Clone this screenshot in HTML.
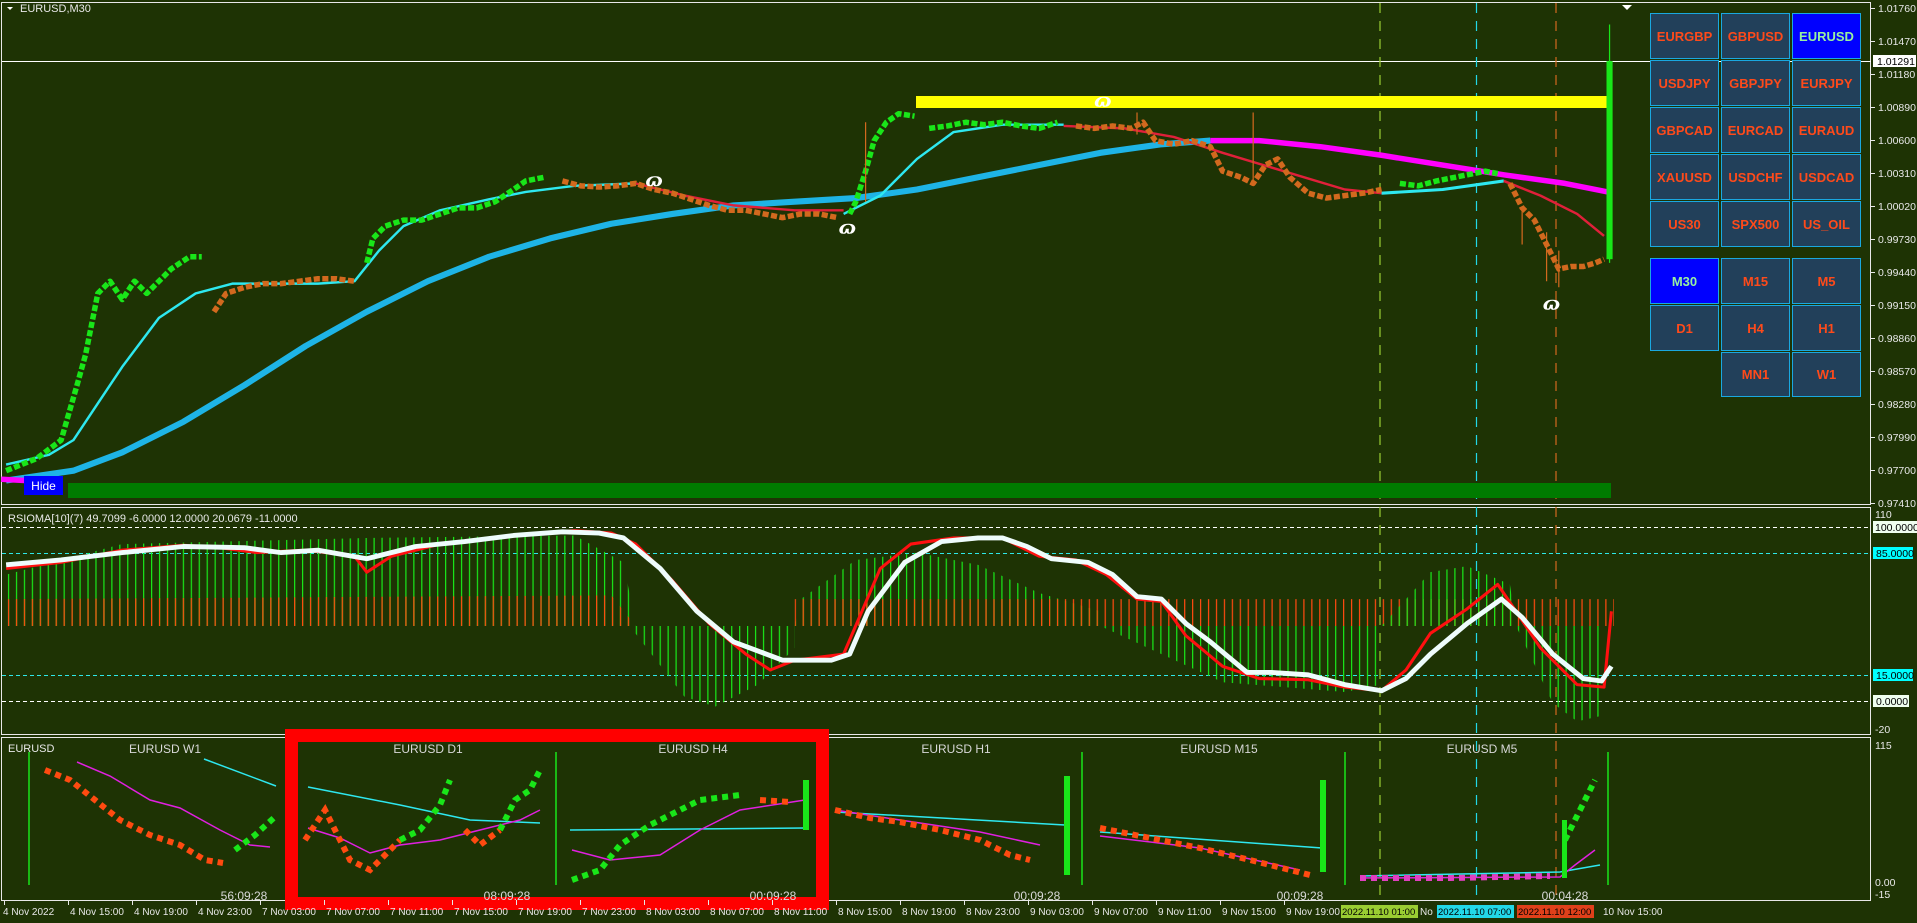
<!DOCTYPE html>
<html><head><meta charset="utf-8">
<style>
html,body{margin:0;padding:0;background:#1e3304;}
body{width:1917px;height:923px;position:relative;overflow:hidden;font-family:"Liberation Sans",sans-serif;}
svg{position:absolute;left:0;top:0;}
.b{position:absolute;background:#22405a;border:1px solid #1aa8e0;box-sizing:border-box;color:#ff4a1a;font:bold 13px "Liberation Sans",sans-serif;display:flex;align-items:center;justify-content:center;}
.b.s{background:#0000ff;color:#98f0a0;}
</style></head><body>
<svg width="1917" height="923" viewBox="0 0 1917 923" font-family="Liberation Sans, sans-serif">
<defs>
<pattern id="pg" width="6.5" height="10" patternUnits="userSpaceOnUse"><rect x="0" y="0" width="1" height="10" fill="#19e619"/></pattern>
<pattern id="po" width="6.5" height="10" patternUnits="userSpaceOnUse"><rect x="0" y="0" width="1" height="10" fill="#ff4a10"/></pattern>
</defs>
<rect width="1917" height="923" fill="#1e3304"/>
<g fill="none" stroke="#e8e8e8" stroke-width="1">
<rect x="1.5" y="2.5" width="1869" height="502"/>
<line x1="1" y1="507.5" x2="1871" y2="507.5"/>
<line x1="1.5" y1="507" x2="1.5" y2="734"/><line x1="1870.5" y1="507" x2="1870.5" y2="734"/>
<line x1="1" y1="734.5" x2="1871" y2="734.5"/>
<line x1="1" y1="737.5" x2="1871" y2="737.5"/>
<line x1="1.5" y1="737" x2="1.5" y2="900"/><line x1="1870.5" y1="737" x2="1870.5" y2="900"/>
<line x1="1" y1="900.5" x2="1871" y2="900.5"/>
</g>
<line x1="2" y1="61.5" x2="1871" y2="61.5" stroke="#fff" stroke-width="1"/>
<g stroke-dasharray="4 3" stroke-width="1">
<line x1="2" y1="527.5" x2="1870" y2="527.5" stroke="#fff"/>
<line x1="2" y1="553.5" x2="1870" y2="553.5" stroke="#2ee8e8"/>
<line x1="2" y1="675.5" x2="1870" y2="675.5" stroke="#2ee8e8"/>
<line x1="2" y1="701.5" x2="1870" y2="701.5" stroke="#fff"/>
</g>
<g stroke-dasharray="10 8" stroke-width="1.2">
<line x1="1380" y1="3" x2="1380" y2="900" stroke="#9acd32"/>
<line x1="1476.5" y1="3" x2="1476.5" y2="900" stroke="#22d8e8"/>
<line x1="1556" y1="3" x2="1556" y2="900" stroke="#d2691e"/>
</g>
<rect x="916" y="96" width="695" height="12" fill="#ffff00"/>
<rect x="68" y="483" width="1543" height="15" fill="#007b00"/>
<path d="M1622 5 L1632 5 L1627 10 Z" fill="#fff"/>

<g transform="scale(1.2226)" fill="none" stroke-linejoin="round" stroke-linecap="butt">
 <path d="M5,393 L60,385 L100,370 L150,345 L200,315 L250,283 L300,255 L350,230 L400,210 L450,195 L500,183 L550,175 L600,168 L650,165 L700,162 L750,155 L800,145 L850,135 L900,125 L950,118 L990,115" stroke="#1eb4e6" stroke-width="5"/>
 <path d="M990,115 L1030,115 L1080,120 L1130,127 L1180,135 L1230,143 L1280,150 L1315,157" stroke="#ff00ff" stroke-width="4.5"/>
 <path d="M1,392 L20,393" stroke="#ff00ff" stroke-width="4.5"/>
 <path d="M5,380 L40,372 L60,360 L80,330 L100,300 L130,260 L160,240 L190,232 L220,232 L260,232 L290,230 L310,205 L330,185 L360,172 L400,163 L430,157 L470,152 L520,150" stroke="#2ee8f0" stroke-width="2"/>
 <path d="M520,150 L560,160 L600,168 L650,172 L690,172" stroke="#e0203a" stroke-width="2"/>
 <path d="M690,175 L720,160 L750,130 L780,108 L820,102 L870,102" stroke="#2ee8f0" stroke-width="2"/>
 <path d="M870,103 L920,105 L960,112 L1000,125 L1050,140 L1100,155 L1130,158" stroke="#e0203a" stroke-width="2"/>
 <path d="M1130,158 L1180,155 L1230,148" stroke="#2ee8f0" stroke-width="2.5"/>
 <path d="M1230,148 L1260,160 L1290,175 L1312,193" stroke="#e0203a" stroke-width="2"/>
 <g stroke-dasharray="5 2" stroke-width="4.5">
 <path d="M5,385 L30,375 L50,360 L63,315 L70,290 L80,240 L90,230 L100,245 L110,230 L120,240 L130,230 L140,220 L155,210 L165,210" stroke="#19e619"/>
 <path d="M175,255 L185,240 L200,235 L215,232 L230,232 L245,230 L260,228 L275,228 L290,230" stroke="#d2691e"/>
 <path d="M300,215 L305,195 L315,185 L330,180 L345,180 L360,175 L375,170 L390,170 L405,165 L420,155 L430,148 L445,145" stroke="#19e619"/>
 <path d="M460,148 L475,152 L490,153 L505,152 L520,150 L535,155 L550,158 L565,163 L580,168 L595,172 L610,172 L625,175 L640,178 L655,175 L670,175 L685,178" stroke="#d2691e"/>
 <path d="M695,175 L700,165 L708,140 L715,115 L725,100 L735,93 L748,95" stroke="#19e619"/>
 <path d="M760,105 L775,103 L790,100 L805,102 L820,100 L835,103 L850,105 L865,100" stroke="#19e619"/>
 <path d="M880,103 L895,105 L910,103 L925,105 L935,100 L945,115 L960,118 L975,115 L990,120 L1000,140 L1015,145 L1025,150 L1035,135 L1045,130 L1055,145 L1070,158 L1085,162 L1100,160 L1115,158 L1130,155" stroke="#d2691e"/>
 <path d="M1145,150 L1160,152 L1175,148 L1190,145 L1205,142 L1215,140 L1225,142" stroke="#19e619"/>
 <path d="M1235,150 L1245,170 L1255,180 L1265,200 L1275,220 L1285,218 L1295,218 L1305,215 L1312,212" stroke="#d2691e"/>
 </g>
 <path d="M1245,170 V200 M1265,190 V230 M1275,205 V235 M1025,92 V150 M930,92 V110 M708,100 V165" stroke="#d2691e" stroke-width="1"/>
 <rect x="1314" y="50" width="5" height="162" fill="#19e619" stroke="none"/>
 <line x1="1316.5" y1="20" x2="1316.5" y2="215" stroke="#19e619" stroke-width="1"/>
 <g fill="#fff" stroke="none" font-size="15" font-style="italic" font-weight="bold" font-family="DejaVu Serif, serif">
  <text x="528" y="152">ɷ</text><text x="686" y="191">ɷ</text><text x="895" y="87">ɷ</text><text x="1262" y="253">ɷ</text>
 </g>

 <polygon points="5,470 100,445 300,440 470,438 510,460 520,512 5,512" fill="url(#pg)" stroke="none"/>
 <polygon points="5,490 500,487 520,512 5,512" fill="url(#po)" stroke="none"/>
 <polygon points="515,512 560,570 585,578 620,560 650,530 650,512" fill="url(#pg)" stroke="none"/>
 <polygon points="650,512 655,490 700,458 750,452 800,462 850,485 900,500 900,512" fill="url(#pg)" stroke="none"/>
 <polygon points="650,490 1320,490 1320,512 650,512" fill="url(#po)" stroke="none"/>
 <polygon points="900,512 1000,558 1100,566 1130,560 1130,512" fill="url(#pg)" stroke="none"/>
 <polygon points="1130,512 1170,468 1200,463 1235,478 1240,512" fill="url(#pg)" stroke="none"/>
 <polygon points="1240,512 1270,575 1290,590 1312,585 1312,512" fill="url(#pg)" stroke="none"/>
 <path d="M5,465 L50,460 L100,450 L150,446 L180,448 L210,452 L250,450 L290,455 L300,468 L320,455 L360,445 L420,438 L470,434 L500,436 L520,445 L550,475 L580,510 L610,535 L630,548 L650,540 L690,535 L705,500 L720,465 L745,445 L780,440 L820,440 L850,455 L880,458 L905,470 L930,490 L950,492 L970,520 L1000,545 L1030,555 L1070,556 L1100,562 L1130,565 L1150,548 L1170,518 L1200,498 L1225,478 L1240,500 L1260,530 L1290,560 L1312,562 L1318,500" stroke="#ff1010" stroke-width="2.5"/>
 <path d="M5,462 L50,458 L100,452 L150,447 L200,448 L230,452 L260,450 L300,457 L340,447 L380,443 L420,438 L460,435 L490,436 L510,440 L540,465 L570,500 L600,525 L640,540 L680,540 L695,535 L710,500 L740,460 L770,443 L800,440 L820,440 L840,447 L860,457 L890,460 L910,470 L930,488 L950,490 L970,510 L990,525 L1020,550 L1040,550 L1070,552 L1100,560 L1130,565 L1150,555 L1170,535 L1200,510 L1228,490 L1245,505 L1270,535 L1295,555 L1310,557 L1318,545" stroke="#eefcfc" stroke-width="4"/>
</g>

<g stroke="#19e619" stroke-width="1.5">
<line x1="29" y1="752" x2="29" y2="885"/><line x1="556" y1="752" x2="556" y2="885"/><line x1="1082" y1="752" x2="1082" y2="885"/><line x1="1345" y1="752" x2="1345" y2="885"/><line x1="1608" y1="752" x2="1608" y2="885"/>
</g>
<g fill="none" stroke-width="1.5">
<path d="M204,759 L276,786" stroke="#2ee8f0"/><path d="M77,762 L110,776 L150,800 L180,808 L220,830 L250,845 L270,847" stroke="#e020e0"/>
<path d="M308,787 L400,805 L470,820 L540,823" stroke="#2ee8f0"/><path d="M308,828 L340,838 L370,853 L400,845 L440,840 L480,830 L520,820 L540,810" stroke="#e020e0"/>
<path d="M570,830 L805,828" stroke="#2ee8f0"/><path d="M572,850 L610,860 L660,855 L700,830 L740,810 L805,800" stroke="#e020e0"/>
<path d="M835,812 L1065,825" stroke="#2ee8f0"/><path d="M835,810 L900,820 L980,832 L1040,845" stroke="#e020e0"/>
<path d="M1100,832 L1322,848" stroke="#2ee8f0"/><path d="M1100,836 L1200,848 L1300,870" stroke="#e020e0"/>
<path d="M1360,876 L1560,872 L1600,865" stroke="#2ee8f0"/><path d="M1360,878 L1560,877 L1575,865 L1595,850" stroke="#e020e0"/>
</g>
<g fill="none" stroke-width="6" stroke-dasharray="6 5">
<path d="M45,770 L70,780 L95,800 L120,820 L150,835 L180,845 L205,860 L223,863" stroke="#ff4a10"/>
<path d="M235,850 L255,835 L277,815" stroke="#19e619"/>
<path d="M305,840 L325,810 L350,860 L370,870 L400,840" stroke="#ff4a10"/>
<path d="M400,840 L420,830 L440,805 L450,780" stroke="#19e619"/>
<path d="M465,830 L480,845 L500,830" stroke="#ff4a10"/>
<path d="M500,830 L515,800 L530,790 L540,770" stroke="#19e619"/>
<path d="M572,880 L600,870 L620,845 L650,825 L680,810 L700,800 L740,795" stroke="#19e619"/>
<path d="M760,800 L790,802" stroke="#ff4a10"/>
<path d="M835,810 L870,818 L900,822 L940,830 L980,840 L1010,855 L1030,860" stroke="#ff4a10"/>
<path d="M1100,828 L1150,838 L1200,848 L1250,860 L1290,870 L1310,875" stroke="#ff4a10"/>
<path d="M1360,878 L1450,878 L1550,876" stroke="#e040c0"/>
<path d="M1565,840 L1580,810 L1595,780" stroke="#19e619"/>
</g>
<g fill="#19e619"><rect x="803" y="780" width="6" height="50"/><rect x="1064" y="776" width="6" height="99"/><rect x="1320" y="780" width="6" height="92"/><rect x="1562" y="820" width="5" height="58"/></g>
<rect x="291.5" y="735.5" width="531" height="168" fill="none" stroke="#ff0000" stroke-width="13"/>
<g fill="#e8e8e8" font-size="11">
<text x="20" y="12">EURUSD,M30</text>
<path d="M7 7 L13 7 L10 10 Z" fill="#fff"/>
<text x="8" y="522">RSIOMA[10](7) 49.7099 -6.0000 12.0000 20.0679 -11.0000</text>
<text x="8" y="752">EURUSD</text>
</g>
<g fill="#d8d8d8" font-size="12" text-anchor="middle">
<text x="165" y="753">EURUSD W1</text><text x="428" y="753">EURUSD D1</text><text x="693" y="753">EURUSD H4</text><text x="956" y="753">EURUSD H1</text><text x="1219" y="753">EURUSD M15</text><text x="1482" y="753">EURUSD M5</text>
<text x="244" y="900">56:09:28</text><text x="507" y="900">08:09:28</text><text x="773" y="900">00:09:28</text><text x="1037" y="900">00:09:28</text><text x="1300" y="900">00:09:28</text><text x="1565" y="900">00:04:28</text>
</g>
<g fill="#e8e8e8" font-size="10.5">
<g stroke="#e8e8e8"><path d="M1871 8.5h4M1871 41.5h4M1871 74.5h4M1871 107.5h4M1871 140.5h4M1871 173.5h4M1871 206.5h4M1871 239.5h4M1871 272.5h4M1871 305.5h4M1871 338.5h4M1871 371.5h4M1871 404.5h4M1871 437.5h4M1871 470.5h4M1871 503.5h4"/></g>
<text x="1878" y="12">1.01760</text><text x="1878" y="45">1.01470</text><text x="1878" y="78">1.01180</text><text x="1878" y="111">1.00890</text><text x="1878" y="144">1.00600</text><text x="1878" y="177">1.00310</text><text x="1878" y="210">1.00020</text><text x="1878" y="243">0.99730</text><text x="1878" y="276">0.99440</text><text x="1878" y="309">0.99150</text><text x="1878" y="342">0.98860</text><text x="1878" y="375">0.98570</text><text x="1878" y="408">0.98280</text><text x="1878" y="441">0.97990</text><text x="1878" y="474">0.97700</text><text x="1878" y="507">0.97410</text>
<rect x="1873" y="55" width="43" height="12" fill="#fff"/><text x="1877" y="65" fill="#000">1.01291</text>
<text x="1875" y="518">110</text>
<rect x="1873" y="521" width="44" height="12" fill="#f0fff0"/><text x="1875" y="531" fill="#000">100.0000</text>
<rect x="1873" y="547" width="40" height="12" fill="#00ffff"/><text x="1876" y="557" fill="#000">85.0000</text>
<rect x="1873" y="669" width="40" height="12" fill="#00ffff"/><text x="1876" y="679" fill="#000">15.0000</text>
<rect x="1873" y="695" width="36" height="12" fill="#f0fff0"/><text x="1876" y="705" fill="#000">0.0000</text>
<text x="1875" y="733">-20</text>
<text x="1875" y="749">115</text>
<text x="1875" y="886">0.00</text><text x="1875" y="898">-15</text>
</g>
<g fill="#e8e8e8" font-size="10">
<g stroke="#e8e8e8"><path d="M4.5 900v5M68.5 900v5M132.5 900v5M196.5 900v5M260.5 900v5M324.5 900v5M388.5 900v5M452.5 900v5M516.5 900v5M580.5 900v5M644.5 900v5M708.5 900v5M772.5 900v5M836.5 900v5M900.5 900v5M964.5 900v5M1028.5 900v5M1092.5 900v5M1156.5 900v5M1220.5 900v5M1284.5 900v5"/></g>
<text x="3" y="915">4 Nov 2022</text>
<text x="70" y="915">4 Nov 15:00</text><text x="134" y="915">4 Nov 19:00</text><text x="198" y="915">4 Nov 23:00</text><text x="262" y="915">7 Nov 03:00</text><text x="326" y="915">7 Nov 07:00</text><text x="390" y="915">7 Nov 11:00</text><text x="454" y="915">7 Nov 15:00</text><text x="518" y="915">7 Nov 19:00</text><text x="582" y="915">7 Nov 23:00</text><text x="646" y="915">8 Nov 03:00</text><text x="710" y="915">8 Nov 07:00</text><text x="774" y="915">8 Nov 11:00</text><text x="838" y="915">8 Nov 15:00</text><text x="902" y="915">8 Nov 19:00</text><text x="966" y="915">8 Nov 23:00</text><text x="1030" y="915">9 Nov 03:00</text><text x="1094" y="915">9 Nov 07:00</text><text x="1158" y="915">9 Nov 11:00</text><text x="1222" y="915">9 Nov 15:00</text><text x="1286" y="915">9 Nov 19:00</text>
<text x="1420" y="915">No</text>
<rect x="1341" y="905" width="77" height="13" fill="#9acd32"/><text x="1342" y="915" fill="#000" font-size="9.5">2022.11.10 01:00</text>
<rect x="1437" y="905" width="77" height="13" fill="#22d8e8"/><text x="1438" y="915" fill="#000" font-size="9.5">2022.11.10 07:00</text>
<rect x="1517" y="905" width="77" height="13" fill="#e0401a"/><text x="1518" y="915" fill="#000" font-size="9.5">2022.11.10 12:00</text>
<text x="1603" y="915">10 Nov 15:00</text>
</g>
</svg>
<div class="b" style="left:24px;top:476px;width:39px;height:19px;background:#0000ff;border-color:#0000ff;color:#fff;font-weight:normal;font-size:12px;">Hide</div>
<div class="b" style="left:1650px;top:13px;width:69px;height:46px;">EURGBP</div>
<div class="b" style="left:1721px;top:13px;width:69px;height:46px;">GBPUSD</div>
<div class="b s" style="left:1792px;top:13px;width:69px;height:46px;">EURUSD</div>
<div class="b" style="left:1650px;top:60px;width:69px;height:46px;">USDJPY</div>
<div class="b" style="left:1721px;top:60px;width:69px;height:46px;">GBPJPY</div>
<div class="b" style="left:1792px;top:60px;width:69px;height:46px;">EURJPY</div>
<div class="b" style="left:1650px;top:107px;width:69px;height:46px;">GBPCAD</div>
<div class="b" style="left:1721px;top:107px;width:69px;height:46px;">EURCAD</div>
<div class="b" style="left:1792px;top:107px;width:69px;height:46px;">EURAUD</div>
<div class="b" style="left:1650px;top:154px;width:69px;height:46px;">XAUUSD</div>
<div class="b" style="left:1721px;top:154px;width:69px;height:46px;">USDCHF</div>
<div class="b" style="left:1792px;top:154px;width:69px;height:46px;">USDCAD</div>
<div class="b" style="left:1650px;top:201px;width:69px;height:46px;">US30</div>
<div class="b" style="left:1721px;top:201px;width:69px;height:46px;">SPX500</div>
<div class="b" style="left:1792px;top:201px;width:69px;height:46px;">US_OIL</div>
<div class="b s" style="left:1650px;top:258px;width:69px;height:46px;">M30</div>
<div class="b" style="left:1721px;top:258px;width:69px;height:46px;">M15</div>
<div class="b" style="left:1792px;top:258px;width:69px;height:46px;">M5</div>
<div class="b" style="left:1650px;top:305px;width:69px;height:46px;">D1</div>
<div class="b" style="left:1721px;top:305px;width:69px;height:46px;">H4</div>
<div class="b" style="left:1792px;top:305px;width:69px;height:46px;">H1</div>
<div class="b" style="left:1721px;top:352px;width:69px;height:45px;">MN1</div>
<div class="b" style="left:1792px;top:352px;width:69px;height:45px;">W1</div>
</body></html>
